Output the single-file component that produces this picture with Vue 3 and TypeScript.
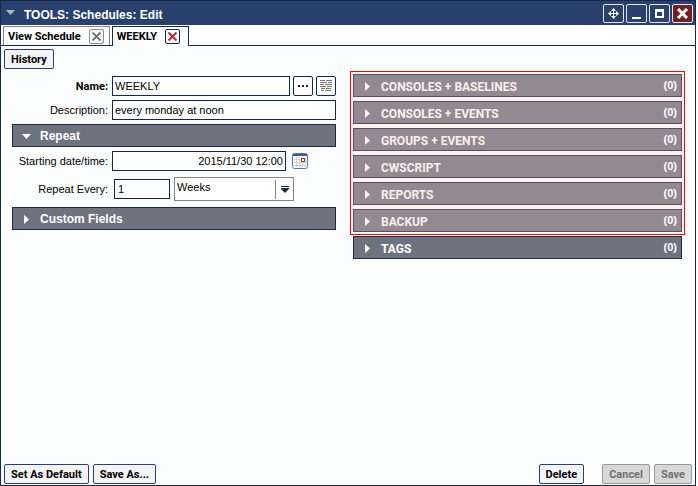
<script setup lang="ts">
import { ref } from 'vue'

interface Panel {
  title: string
  count: number
}

const tabs = ['View Schedule', 'WEEKLY']
const activeTab = ref('WEEKLY')

const name = ref('WEEKLY')
const description = ref('every monday at noon')
const startAt = ref('2015/11/30 12:00')
const every = ref('1')
const unit = ref('Weeks')
const units = ['Minutes', 'Hours', 'Days', 'Weeks', 'Months']

const linked: Panel[] = [
  { title: 'CONSOLES + BASELINES', count: 0 },
  { title: 'CONSOLES + EVENTS', count: 0 },
  { title: 'GROUPS + EVENTS', count: 0 },
  { title: 'CWSCRIPT', count: 0 },
  { title: 'REPORTS', count: 0 },
  { title: 'BACKUP', count: 0 },
]
</script>

<template>
  <div class="window">
    <header class="titlebar">
      <button class="menu" type="button" aria-label="Window menu">
        <svg width="9" height="5" viewBox="0 0 9 5"><path d="M0 0H9L4.500 5Z" fill="#b4b4b4" /></svg>
      </button>
      <h1>TOOLS: Schedules: Edit</h1>
      <div class="controls">
        <button type="button" aria-label="Move">
          <svg width="11" height="11" viewBox="0 0 11 11">
            <path d="M5 1h1v4h4v1h-4v4h-1v-4h-4v-1h4z" fill="#fff" />
            <path d="M5.500 0L8 3H3zM5.500 11L8 8H3zM0 5.500L3 3V8zM11 5.500L8 3V8z" fill="#fff" />
          </svg>
        </button>
        <button type="button" aria-label="Minimize">
          <svg width="11" height="11" viewBox="0 0 11 11"><path d="M1 9h9v2h-9z" fill="#fff" /></svg>
        </button>
        <button type="button" aria-label="Maximize">
          <svg width="11" height="11" viewBox="0 0 11 11">
            <path d="M1 1h9v9h-9zM3 4v4h5v-4z" fill="#fff" fill-rule="evenodd" />
          </svg>
        </button>
        <button class="close" type="button" aria-label="Close">
          <svg width="11" height="11" viewBox="0 0 11 11">
            <path d="M1 1L10 10M10 1L1 10" stroke="#fff" stroke-width="3" />
          </svg>
        </button>
      </div>
    </header>

    <nav class="tabs">
      <div v-for="tab in tabs" :key="tab" class="tab" :class="{ active: tab === activeTab }">
        <button class="tab-name" type="button" @click="activeTab = tab">{{ tab }}</button>
        <button class="tab-close" type="button" :aria-label="`Close ${tab}`">
          <svg width="9" height="9" viewBox="0 0 9 9">
            <path d="M0.500 0.500L8.500 8.500M8.500 0.500L0.500 8.500" stroke="currentColor" stroke-width="2" />
          </svg>
        </button>
      </div>
    </nav>

    <div class="toolbar">
      <button class="btn" type="button">History</button>
    </div>

    <main class="content">
      <form class="form" @submit.prevent>
        <div class="field">
          <label class="strong" for="name">Name:</label>
          <div class="name-group">
            <input id="name" v-model="name" class="grow" type="text" />
            <button class="icon-btn" type="button" aria-label="Browse">
              <svg width="12" height="2" viewBox="0 0 12 2">
                <path d="M1 0h2v2h-2zM5 0h2v2h-2zM9 0h2v2h-2z" fill="#223" />
              </svg>
            </button>
            <button class="icon-btn" type="button" aria-label="Notes">
              <svg width="12" height="12" viewBox="0 0 12 12">
                <path
                  d="M0 .5H5M6 .5H12M0 2.500H7M8 2.500H12M0 4.500H4M5 4.500H12M0 6.500H6M7 6.500H12M1 8.500H5M6 8.500H11M1 10.500H4M5 10.500H11"
                  stroke="#757575"
                />
              </svg>
            </button>
          </div>
        </div>
        <div class="field">
          <label for="description">Description:</label>
          <input id="description" v-model="description" class="grow" type="text" />
        </div>

        <button class="bar" type="button" aria-expanded="true">
          <svg width="9" height="9" viewBox="0 0 9 9"><path d="M0 2H9L4.500 7Z" fill="#fff" /></svg>
          <span>Repeat</span>
        </button>

        <div class="field">
          <label for="start">Starting date/time:</label>
          <input id="start" v-model="startAt" class="date" type="text" />
          <button class="calendar" type="button" aria-label="Pick a date">
            <svg width="16" height="16" viewBox="0 0 16 16">
              <rect x=".5" y=".5" width="15" height="15" rx="2" fill="#fff" stroke="#5a74a8" />
              <path d="M1 1h14v2h-14z" fill="#4a4fa8" />
              <path d="M2 6.500h12M2 9.500h12M2 12.500h12M4.500 4v10M7.500 4v10M10.500 4v10M13.500 4v10" stroke="#cfcfd6" />
              <rect x="9.500" y="5.500" width="3" height="3" fill="#fff" stroke="#b03038" />
            </svg>
          </button>
        </div>
        <div class="field repeat">
          <label for="every">Repeat Every:</label>
          <input id="every" v-model="every" class="count-input" type="text" />
          <div class="select">
            <select v-model="unit" aria-label="Repeat unit">
              <option v-for="u in units" :key="u">{{ u }}</option>
            </select>
            <svg width="8" height="7" viewBox="0 0 8 7">
              <path d="M0 0h8v1h-8zM0 2h8v1L4 7L0 3z" fill="#17304d" />
            </svg>
          </div>
        </div>

        <button class="bar" type="button" aria-expanded="false">
          <svg width="9" height="9" viewBox="0 0 9 9"><path d="M2 0L7 4.500L2 9Z" fill="#fff" /></svg>
          <span>Custom Fields</span>
        </button>
      </form>

      <section class="panels">
        <div class="highlight">
          <button v-for="p in linked" :key="p.title" class="bar caps" type="button" aria-expanded="false">
            <svg width="9" height="9" viewBox="0 0 9 9"><path d="M2 0L7 4.500L2 9Z" fill="currentColor" /></svg>
            <span class="title">{{ p.title }}</span>
            <span class="count">({{ p.count }})</span>
          </button>
        </div>
        <div class="plain">
          <button class="bar caps" type="button" aria-expanded="false">
            <svg width="9" height="9" viewBox="0 0 9 9"><path d="M2 0L7 4.500L2 9Z" fill="currentColor" /></svg>
            <span class="title">TAGS</span>
            <span class="count">(0)</span>
          </button>
        </div>
      </section>
    </main>

    <footer class="footer">
      <button class="btn" type="button">Set As Default</button>
      <button class="btn" type="button">Save As...</button>
      <button class="btn delete" type="button">Delete</button>
      <button class="btn" type="button" disabled>Cancel</button>
      <button class="btn" type="button" disabled>Save</button>
    </footer>
  </div>
</template>

<style>
body {
  margin: 0;
  background: #fff;
}
</style>

<style scoped>
.window,
.window * {
  box-sizing: border-box;
}

.window {
  display: flex;
  flex-direction: column;
  min-height: 100vh;
  margin-right: 2px;
  border: 1px solid #14294a;
  background: #fcfdfe;
  color: #000;
  font-family: 'Liberation Sans', Arial, sans-serif;
  font-size: 11px;
}

button,
input,
select {
  margin: 0;
  padding: 0;
  border: 0;
  background: none;
  color: inherit;
  font: inherit;
}

svg {
  display: block;
  flex: none;
}

.titlebar {
  display: flex;
  align-items: center;
  height: 24px;
  padding: 0 2px 0 5px;
  background: #2a4170;
  color: #fff;
}

.menu {
  padding-bottom: 2px;
}

h1 {
  flex: 1;
  margin: 0 0 0 9px;
  padding-top: 4px;
  font-size: 12px;
  line-height: 16px;
}

.controls {
  display: flex;
  gap: 2px;
}

.controls button {
  display: flex;
  align-items: center;
  justify-content: center;
  width: 21px;
  height: 19px;
  border: 1px solid #e4e8f0;
  border-radius: 2px;
}

.controls .close {
  background: #702222;
}

.tabs {
  display: flex;
  gap: 2px;
  height: 21px;
  padding: 1px 2px 0;
  border-bottom: 1px solid #14294a;
  background: #fff;
}

.tab {
  display: flex;
  align-items: center;
  gap: 8px;
  height: 19px;
  padding: 0 5px 0 4px;
  border: 1px solid #8d8085;
  border-bottom: 0;
  font-family: Roboto, 'Liberation Sans', sans-serif;
  font-weight: bold;
}

.tab.active {
  height: 20px;
  padding: 0 8px 1px 4px;
  border-color: #14294a;
  background: #fcfdfe;
}

.tab-name {
  line-height: 16px;
  padding-top: 2px;
}

.tab-close {
  display: flex;
  align-items: center;
  justify-content: center;
  width: 15px;
  height: 15px;
  border: 1px solid #8a8a8a;
  border-radius: 2px;
  color: #777;
}

.active .tab-close {
  border-color: #14294a;
  color: #b83030;
}

.toolbar {
  padding: 3px;
}

.btn {
  height: 20px;
  padding: 1px 6px 0;
  border: 1px solid #2a4170;
  border-radius: 2px;
  background: #f4f4f5;
  font-family: Roboto, 'Liberation Sans', sans-serif;
  font-weight: bold;
}

.btn:disabled {
  border-color: #989898;
  background: #d8d8d8;
  color: #707070;
}

.content {
  display: grid;
  flex: 1;
  grid-template-columns: 324fr 335fr;
  gap: 14px;
  align-items: start;
  padding: 0 10px 0 11px;
}

.form {
  display: flex;
  flex-direction: column;
  gap: 4px;
  padding-top: 4px;
}

.field {
  display: flex;
  align-items: center;
  gap: 4px;
}

.field label {
  width: 96px;
  text-align: right;
  white-space: nowrap;
}

.field .strong {
  font-family: Roboto, 'Liberation Sans', sans-serif;
  font-weight: bold;
}

.name-group {
  display: flex;
  flex: 1;
  gap: 3px;
  min-width: 0;
}

.field input {
  height: 20px;
  min-width: 0;
  padding: 0 2px;
  border: 1px solid #14294a;
  background: #fff;
}

.field .grow {
  flex: 1;
}

.field .date {
  width: 174px;
  text-align: right;
}

.icon-btn {
  display: flex;
  align-items: center;
  justify-content: center;
  width: 20px;
  height: 20px;
  border: 1px solid #14294a;
  border-radius: 2px;
  background: #fff;
}

.calendar {
  margin-left: 2px;
}

.repeat {
  padding: 2px 0;
}

.field .count-input {
  width: 56px;
  margin-left: 2px;
  padding-left: 3px;
}

.select {
  display: grid;
  grid-template-columns: 1fr 18px;
  align-items: center;
  width: 120px;
  height: 24px;
  border: 1px solid #858585;
  background: #fff;
}

.select select {
  grid-area: 1 / 1 / 2 / 3;
  height: 22px;
  padding: 0 20px 4px 2px;
  appearance: none;
}

.select svg {
  grid-area: 1 / 2;
  box-sizing: content-box;
  padding: 6px 5px;
  border-left: 1px solid #858585;
  pointer-events: none;
}

.bar {
  display: flex;
  align-items: center;
  gap: 9px;
  width: 100%;
  height: 23px;
  padding: 1px 4px 0 9px;
  border: 1px solid #1d2a44;
  background: #6e7380;
  color: #fff;
  font-size: 12px;
  font-weight: bold;
  text-align: left;
}

.caps {
  font-family: Roboto, 'Liberation Sans', sans-serif;
}

.title {
  padding-top: 2px;
}

.count {
  align-self: flex-start;
  margin-left: auto;
  font-family: 'Liberation Sans', Arial, sans-serif;
  font-size: 11px;
  line-height: 18px;
}

.highlight {
  display: flex;
  flex-direction: column;
  gap: 4px;
  margin-top: -1px;
  padding: 2px;
  border: 1px solid #f00;
  background: #fff0f0;
}

.highlight .bar {
  border-color: #575061;
  background: #938990;
  color: #ffeef0;
}

.highlight .count {
  color: #fff;
}

.plain {
  padding: 1px 3px 0;
}

.footer {
  display: flex;
  gap: 4px;
  padding: 0 3px 1px;
}

.delete {
  margin-left: auto;
  margin-right: 14px;
}
</style>
